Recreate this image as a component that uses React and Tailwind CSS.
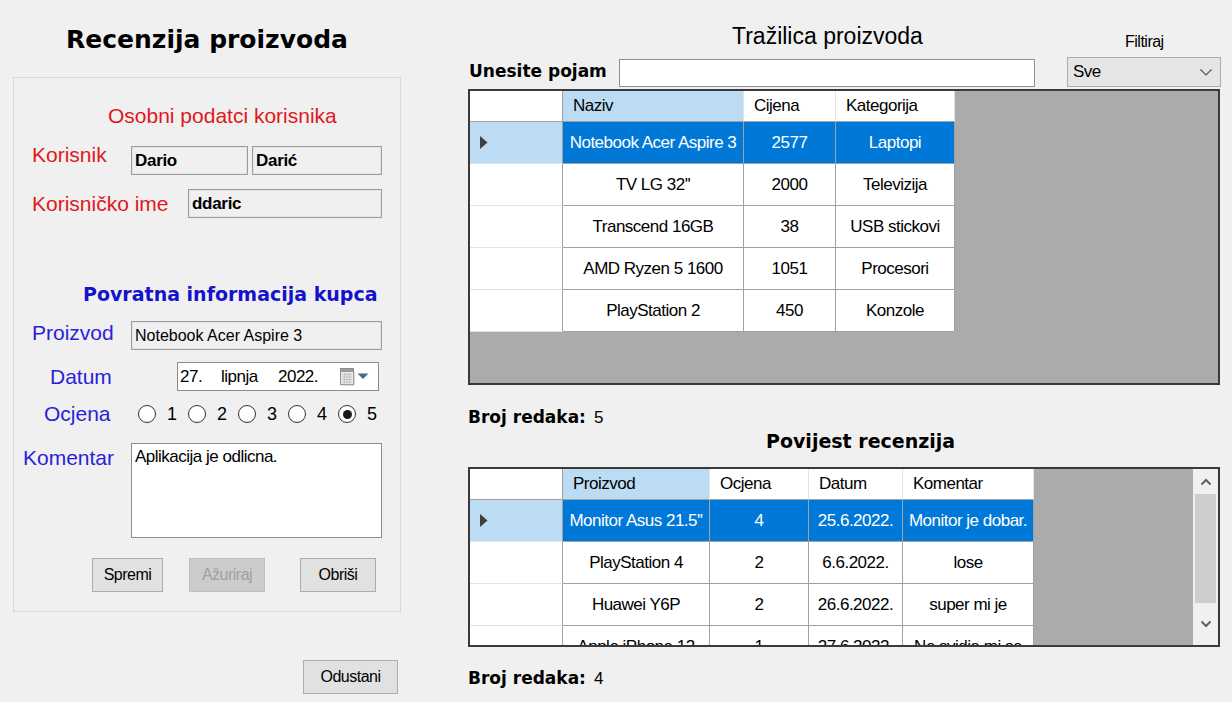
import React from "react";

const NARROW = "font-['Liberation_Sans',Arial,sans-serif] tracking-[-0.5px]";
const ARIAL = "font-['Liberation_Sans',Arial,sans-serif]";
const DV = "font-['DejaVu_Sans',Verdana,sans-serif] font-bold";

function RowArrow() {
  return (
    <svg width="8" height="13" viewBox="0 0 8 13">
      <path d="M0 0 L7.5 6.5 L0 13 Z" fill="#3f3f3f" />
    </svg>
  );
}

function CalendarIcon() {
  return (
    <svg width="15" height="18" viewBox="0 0 15 18">
      <rect x="0.5" y="0.5" width="13" height="16" fill="#e9e9e9" stroke="#8d8d8d" />
      <rect x="1" y="1" width="12" height="3" fill="#9a9a9a" />
      <path d="M2 6.5 H12 M2 9 H12 M2 11.5 H12 M2 14 H12 M4.5 5 V15.5 M7 5 V15.5 M9.5 5 V15.5" stroke="#c4c4c4" strokeWidth="1" />
      <path d="M14 4 V17 H2" stroke="#b5b5b5" fill="none" />
    </svg>
  );
}

function Radio({ n, checked }) {
  return (
    <div className="flex items-center w-[50px]">
      <div className="w-[18px] h-[18px] rounded-full border-[1.5px] border-[#333333] bg-white flex items-center justify-center">
        {checked && <div className="w-[9px] h-[9px] rounded-full bg-[#1a1a1a]" />}
      </div>
      <span className={`${NARROW} ml-[11px] text-[18px] leading-[22px] text-black`}>{n}</span>
    </div>
  );
}

function Btn({ children, w, disabled }) {
  return (
    <div
      className={`${NARROW} h-[34px] flex items-center justify-center text-[16px] border ${
        disabled ? "bg-[#cccccc] border-[#bfbfbf] text-[#a0a0a0]" : "bg-[#e1e1e1] border-[#adadad] text-black"
      }`}
      style={{ width: w }}
    >
      {children}
    </div>
  );
}

const products = [
  ["Notebook Acer Aspire 3", "2577", "Laptopi"],
  ["TV LG 32''", "2000", "Televizija"],
  ["Transcend 16GB", "38", "USB stickovi"],
  ["AMD Ryzen 5 1600", "1051", "Procesori"],
  ["PlayStation 2", "450", "Konzole"],
];

const reviews = [
  ["Monitor Asus 21.5''", "4", "25.6.2022.", "Monitor je dobar."],
  ["PlayStation 4", "2", "6.6.2022.", "lose"],
  ["Huawei Y6P", "2", "26.6.2022.", "super mi je"],
  ["Apple iPhone 12", "1", "27.6.2022.", "Ne svidja mi se"],
];

function HeaderCell({ w, label, active }) {
  return (
    <div
      className={`h-full border-b border-r border-b-[#a0a0a0] border-r-[#e3e3e3] flex items-center pl-[10px] text-[17px] text-black ${
        active ? "bg-[#bcdcf4]" : "bg-white"
      }`}
      style={{ width: w }}
    >
      {label}
    </div>
  );
}

function DataRow({ cells, widths, selected }) {
  return (
    <div className="flex h-[42px] shrink-0">
      <div
        className={`w-[93px] shrink-0 h-full border-r border-b border-r-[#a0a0a0] border-b-[#e3e3e3] flex items-center pl-[10px] ${
          selected ? "bg-[#bcdcf4]" : "bg-white"
        }`}
      >
        {selected && <RowArrow />}
      </div>
      {cells.map((c, i) => (
        <div
          key={i}
          className={`h-full shrink-0 border-r border-b border-[#a0a0a0] flex items-center justify-center whitespace-nowrap overflow-hidden text-[17px] ${
            selected ? "bg-[#0078d7] text-white" : "bg-white text-black"
          }`}
          style={{ width: widths[i] }}
        >
          {c}
        </div>
      ))}
    </div>
  );
}

function ProductsTable() {
  const widths = [181, 92, 119];
  return (
    <div className={`${NARROW} w-[752px] h-[296px] border-2 border-[#3a3a3a] bg-[#ababab] overflow-hidden`}>
      <div className="flex h-[31px]">
        <div className="w-[93px] h-full bg-white border-r border-b border-[#a0a0a0]" />
        <HeaderCell w={181} label="Naziv" active />
        <HeaderCell w={92} label="Cijena" />
        <HeaderCell w={119} label="Kategorija" />
      </div>
      {products.map((p, i) => (
        <DataRow key={i} cells={p} widths={widths} selected={i === 0} />
      ))}
    </div>
  );
}

function ReviewsTable() {
  const widths = [147, 99, 94, 131];
  return (
    <div className={`${NARROW} w-[752px] h-[180px] border-2 border-[#3a3a3a] bg-[#ababab] flex overflow-hidden`}>
      <div className="flex-1 flex flex-col overflow-hidden">
        <div className="flex h-[31px] shrink-0">
          <div className="w-[93px] h-full bg-white border-r border-b border-[#a0a0a0]" />
          <HeaderCell w={147} label="Proizvod" active />
          <HeaderCell w={99} label="Ocjena" />
          <HeaderCell w={94} label="Datum" />
          <HeaderCell w={131} label="Komentar" />
        </div>
        {reviews.map((r, i) => (
          <DataRow key={i} cells={r} widths={widths} selected={i === 0} />
        ))}
      </div>
      <div className="w-[25px] shrink-0 bg-[#f0f0f0] flex flex-col items-center">
        <div className="h-[25px] flex items-center justify-center">
          <svg width="12" height="8" viewBox="0 0 12 8">
            <path d="M1.5 6.5 L6 2 L10.5 6.5" stroke="#606060" strokeWidth="2" fill="none" />
          </svg>
        </div>
        <div className="w-[21px] h-[109px] bg-[#cdcdcd]" />
        <div className="flex-1 flex items-center justify-center">
          <svg width="12" height="8" viewBox="0 0 12 8">
            <path d="M1.5 1.5 L6 6 L10.5 1.5" stroke="#606060" strokeWidth="2" fill="none" />
          </svg>
        </div>
      </div>
    </div>
  );
}

const inputRO = "h-[29px] bg-[#f0f0f0] border border-[#9c9c9c] shadow-[inset_0_0_0_1px_#e4e4e4] flex items-center pl-[3px]";

export default function App() {
  return (
    <div className={`${ARIAL} w-[1232px] h-[702px] bg-[#f0f0f0] flex overflow-hidden`}>
      {/* Left column */}
      <div className="w-[420px] shrink-0">
        <div className={`${DV} text-[25px] leading-[30px] text-center w-[388px] ml-[13px] mt-[25px] text-black`}>
          Recenzija proizvoda
        </div>
        <div className="ml-[13px] mt-[22px] w-[388px] h-[535px] border border-[#d8d8d8]">
          <div className="mt-[26px] pl-[94px] text-[21px] leading-[24px] text-[#e0181c]">Osobni podatci korisnika</div>

          <div className="mt-[18px] flex h-[29px]">
            <div className="ml-[18px] w-[99px] -mt-[3px] text-[21px] leading-[24px] text-[#e0181c]">Korisnik</div>
            <div className={`${inputRO} w-[117px] font-bold text-[17px] tracking-[-0.3px]`}>Dario</div>
            <div className={`${inputRO} w-[130px] ml-[4px] font-bold text-[17px] tracking-[-0.3px]`}>Darić</div>
          </div>

          <div className="mt-[14px] flex items-center h-[29px]">
            <div className="ml-[18px] w-[156px] text-[21px] leading-[24px] text-[#e0181c]">Korisničko ime</div>
            <div className={`${inputRO} w-[194px] font-bold text-[17px] tracking-[-0.3px]`}>ddaric</div>
          </div>

          <div className={`${DV} mt-[64px] pl-[69px] text-[19px] leading-[24px] text-[#1512cc]`}>Povratna informacija kupca</div>

          <div className="mt-[15px] flex items-start h-[29px]">
            <div className="ml-[18px] w-[99px] text-[21px] leading-[24px] text-[#2a22d8]">Proizvod</div>
            <div className={`${inputRO} w-[251px] text-[16px]`}>Notebook Acer Aspire 3</div>
          </div>

          <div className="mt-[12px] flex items-center h-[29px]">
            <div className="ml-[36px] w-[127px] text-[21px] leading-[24px] text-[#2a22d8]">Datum</div>
            <div className={`${NARROW} w-[202px] h-[29px] bg-white border border-[#8c8c8c] flex items-center pl-[2px] text-[17px] text-black`}>
              <span className="w-[41px]">27.</span>
              <span className="w-[57px]">lipnja</span>
              <span className="w-[62px]">2022.</span>
              <div className="flex items-center">
                <CalendarIcon />
                <svg width="13" height="7" viewBox="0 0 13 7" className="ml-[2px]">
                  <path d="M0.5 0.5 H11.5 L6 6 Z" fill="#4a6790" />
                </svg>
              </div>
            </div>
          </div>

          <div className="mt-[10px] flex items-center h-[26px]">
            <div className="ml-[30px] w-[94px] text-[21px] leading-[24px] text-[#2a22d8]">Ocjena</div>
            <Radio n="1" />
            <Radio n="2" />
            <Radio n="3" />
            <Radio n="4" />
            <Radio n="5" checked />
          </div>

          <div className="mt-[16px] flex items-start">
            <div className="ml-[9px] w-[108px] mt-[3px] text-[21px] leading-[24px] text-[#2a22d8]">Komentar</div>
            <div className={`${NARROW} w-[251px] h-[95px] bg-white border border-[#8c8c8c] pl-[3px] pt-[2px] text-[17px] leading-[22px] text-black`}>
              Aplikacija je odlicna.
            </div>
          </div>

          <div className="mt-[20px] flex ml-[78px]">
            <Btn w={71}>Spremi</Btn>
            <div className="ml-[26px]">
              <Btn w={76} disabled>Ažuriraj</Btn>
            </div>
            <div className="ml-[35px]">
              <Btn w={76}>Obriši</Btn>
            </div>
          </div>
        </div>
        <div className="mt-[48px] ml-[303px]">
          <Btn w={95}>Odustani</Btn>
        </div>
      </div>

      {/* Right column */}
      <div className="flex-1 pl-[48px]">
        <div className="flex h-[57px]">
          <div className="w-[599px] pt-[22px] pl-[264px] text-[23px] leading-[28px] text-black">Tražilica proizvoda</div>
          <div className={`${NARROW} w-[154px] pt-[32px] pl-[58px] text-[16px] leading-[20px] text-black`}>Filtiraj</div>
        </div>
        <div className="flex items-end h-[30px]">
          <div className={`${DV} w-[151px] self-start mt-[4px] pl-[1px] text-[17px] leading-[20px] text-black`}>Unesite pojam</div>
          <div className="w-[416px] h-[28px] bg-white border border-[#8f8f8f]" />
          <div className={`${NARROW} ml-[32px] w-[154px] h-[30px] bg-[#e5e5e5] border border-[#adadad] flex items-center justify-between pl-[5px] pr-[8px] text-[17px] text-black`}>
            <span>Sve</span>
            <svg width="12" height="7" viewBox="0 0 12 7">
              <path d="M0.5 0.5 L6 6 L11.5 0.5" stroke="#555555" strokeWidth="1.2" fill="none" />
            </svg>
          </div>
        </div>

        <div className="mt-[2px]">
          <ProductsTable />
        </div>

        <div className="mt-[22px] flex items-baseline">
          <span className={`${DV} text-[17px] leading-[20px] text-black`}>Broj redaka:</span>
          <span className={`${NARROW} ml-[8px] text-[17px] leading-[20px] text-black`}>5</span>
        </div>

        <div className={`${DV} mt-[1px] pl-[298px] text-[19px] leading-[24px] text-black`}>Povijest recenzija</div>

        <div className="mt-[14px]">
          <ReviewsTable />
        </div>

        <div className="mt-[21px] flex items-baseline">
          <span className={`${DV} text-[17px] leading-[20px] text-black`}>Broj redaka:</span>
          <span className={`${NARROW} ml-[8px] text-[17px] leading-[20px] text-black`}>4</span>
        </div>
      </div>
    </div>
  );
}
